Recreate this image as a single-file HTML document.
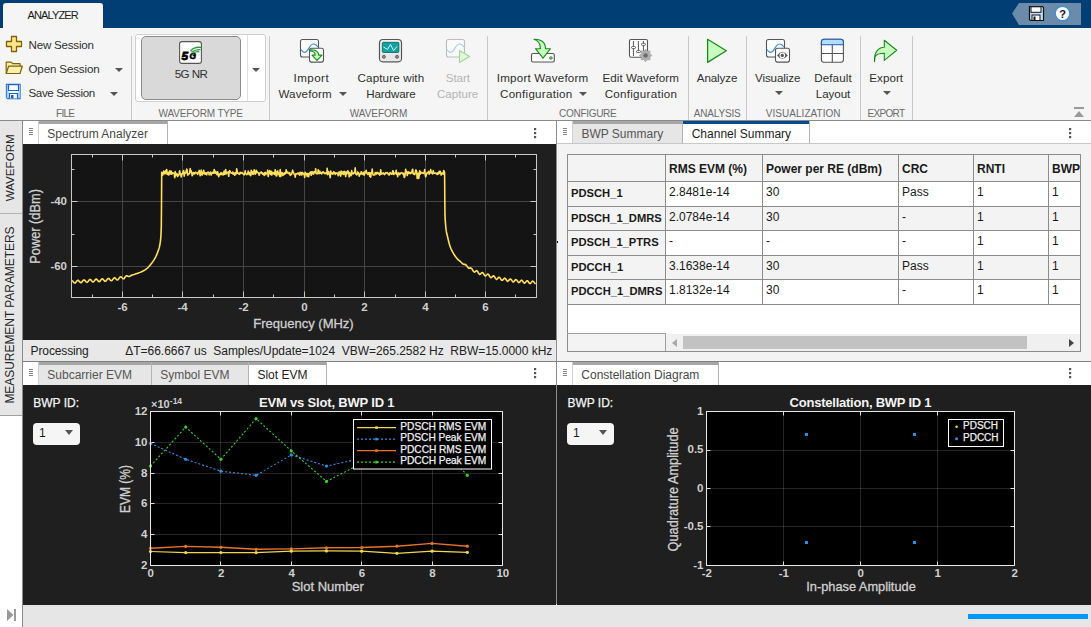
<!DOCTYPE html>
<html><head><meta charset="utf-8"><style>
*{margin:0;padding:0;box-sizing:border-box}
html,body{width:1091px;height:627px;overflow:hidden;background:#fff;font-family:"Liberation Sans",sans-serif;color:#222}
.a{position:absolute}
.t{position:absolute;white-space:nowrap;line-height:1}
#top{left:0;top:0;width:1091px;height:28px;background:#003e73}
#tab{left:3px;top:3px;width:100px;height:25px;background:#f5f5f5;border-radius:3px 3px 0 0}
#ts{left:0;top:28px;width:1091px;height:92px;background:#f5f5f5}
.sep{position:absolute;width:1px;background:#c8c8c8;top:36px;height:84px}
.lbl{position:absolute;top:107px;font-size:10px;color:#6b6b6b;white-space:nowrap;line-height:1;text-align:center}
.btxt{position:absolute;font-size:12px;color:#262626;white-space:nowrap;line-height:16px;text-align:center}
.arr{position:absolute;width:0;height:0;border-left:4px solid transparent;border-right:4px solid transparent;border-top:4px solid #555}
</style></head><body>
<div class="a" id="top"></div>
<div class="a" id="tab"></div>
<div class="t" style="left:-146.9px;width:400px;text-align:center;top:9.99px;font-size:11px;color:#1a1a1a;font-weight:normal;letter-spacing:-0.894px;text-indent:-0.894px;">ANALYZER</div>
<svg class="a" style="left:1011px;top:3px" width="71" height="22"><polygon points="1,10.5 8,0 70,0 70,22 8,22" fill="#6b8bab"/></svg>
<svg class="a" style="left:1028px;top:5px" width="17" height="17" viewBox="0 0 17 17">
<path d="M1.5 1.5h13l1 1v13h-13l-1-1z" fill="#bfe3ff" stroke="#111" stroke-width="1.2"/>
<rect x="3" y="1.8" width="10" height="5.5" fill="#fff" stroke="#111" stroke-width="1"/>
<rect x="4" y="10" width="8" height="5.5" fill="#fff" stroke="#111" stroke-width="1"/>
<rect x="5.5" y="11.5" width="2" height="4" fill="#111"/></svg>
<svg class="a" style="left:1054px;top:5px" width="17" height="17" viewBox="0 0 17 17">
<circle cx="8.5" cy="8.5" r="7.2" fill="#fff" stroke="#3a8fd9" stroke-width="1.2"/>
<text x="8.5" y="13" font-family="Liberation Sans" font-weight="bold" font-size="11" text-anchor="middle" fill="#111">?</text></svg>
<div class="a" id="ts"></div>
<div class="a" style="left:0;top:120px;width:1091px;height:1px;background:#8a8a8a"></div>
<div class="sep" style="left:131px"></div>
<div class="sep" style="left:269px"></div>
<div class="sep" style="left:487px"></div>
<div class="sep" style="left:688px"></div>
<div class="sep" style="left:746px"></div>
<div class="sep" style="left:860px"></div>
<div class="sep" style="left:912px"></div>
<svg class="a" style="left:5px;top:35px;overflow:visible" width="18" height="18" viewBox="0 0 18 18"><path d="M6.5 1.5h5v5h5v5h-5v5h-5v-5h-5v-5h5z" fill="#fde68a" stroke="#7d6400" stroke-width="1.3" stroke-linejoin="round"/></svg>
<svg class="a" style="left:5px;top:59px;overflow:visible" width="18" height="16" viewBox="0 0 18 16"><path d="M1.2 14.5V3.2h5l1.5 1.5h7.3v2.3" fill="#fdeeb0" stroke="#7d6400" stroke-width="1.2" stroke-linejoin="round"/><path d="M1.2 14.5L3.6 7.2H17.3L15 14.5z" fill="#fdeeb0" stroke="#7d6400" stroke-width="1.2" stroke-linejoin="round"/></svg>
<svg class="a" style="left:5px;top:83px;overflow:visible" width="17" height="17" viewBox="0 0 17 17"><path d="M1.5 1.5h13.5v14h-12.5l-1-1z" fill="#fff" stroke="#1e64c8" stroke-width="1.3"/><rect x="1.7" y="1.7" width="2" height="13.5" fill="#9fd0ff"/><rect x="13" y="1.7" width="2" height="13.5" fill="#9fd0ff"/><path d="M3.5 1.5v6h10v-6" fill="none" stroke="#1e64c8" stroke-width="1.2"/><path d="M4.5 15.5v-5h8v5" fill="#fff" stroke="#1e64c8" stroke-width="1.2"/><rect x="6" y="12" width="2.5" height="3.5" fill="#1e64c8"/></svg>
<div class="t" style="left:28.5px;top:39.18px;font-size:11.6px;color:#303030;font-weight:normal;letter-spacing:-0.220px;">New Session</div>
<div class="t" style="left:28.5px;top:63.18px;font-size:11.6px;color:#303030;font-weight:normal;letter-spacing:-0.152px;">Open Session</div>
<div class="t" style="left:28.5px;top:87.18px;font-size:11.6px;color:#303030;font-weight:normal;letter-spacing:-0.385px;">Save Session</div>
<svg class="a" style="left:115px;top:67.5px" width="8" height="4"><polygon points="0,0 8,0 4.0,4" fill="#555"/></svg>
<svg class="a" style="left:110px;top:91.5px" width="8" height="4"><polygon points="0,0 8,0 4.0,4" fill="#555"/></svg>
<div class="a" style="left:135px;top:34px;width:131px;height:68px;background:#fff;border:1px solid #cfcfcf;border-radius:3px"></div>
<div class="a" style="left:141px;top:36px;width:100px;height:64px;background:#d9d9d9;border:1px solid #8c8c8c;border-radius:5px"></div>
<div class="a" style="left:247px;top:35px;width:1px;height:66px;background:#e0e0e0"></div>
<svg class="a" style="left:252px;top:67.5px" width="8" height="4"><polygon points="0,0 8,0 4.0,4" fill="#555"/></svg>
<svg class="a" style="left:179px;top:41px;overflow:visible" width="23" height="23" viewBox="0 0 23 23"><rect x="0.6" y="0.6" width="21.8" height="21.8" rx="2.5" fill="#fff" stroke="#555" stroke-width="1.1"/><text x="2.6" y="18.6" font-family="Liberation Sans" font-weight="bold" font-style="italic" font-size="11.8" fill="#000" stroke="#000" stroke-width="0.8">5</text><text x="10.6" y="18.4" font-family="Liberation Sans" font-weight="bold" font-style="italic" font-size="8.4" fill="#000" stroke="#000" stroke-width="0.6">G</text><path d="M11.8 9.8 Q15.5 5.6 21.8 6.4 M13 11 Q16.5 8.3 21 8.6 M14.2 12 Q17 10.3 19.8 10.6" stroke="#2a9a3a" stroke-width="1.3" fill="none" stroke-linecap="round"/></svg>
<div class="t" style="left:-8.699999999999989px;width:400px;text-align:center;top:67.68px;font-size:11.6px;color:#303030;font-weight:normal;letter-spacing:-0.538px;text-indent:-0.538px;">5G NR</div>
<svg class="a" style="left:296px;top:36px;overflow:visible" width="32" height="30" viewBox="0 0 32 30"><rect x="4.5" y="3.5" width="18" height="17.5" rx="2" fill="#fff" stroke="#555" stroke-width="1.1"/><path d="M5 13.5 C7 16.5 8.5 17 10.5 15.5 S14 8 17.5 8 C19.5 8 21 9.5 22 11" stroke="#3a8fe0" stroke-width="1.2" fill="none"/><rect x="13.5" y="12.3" width="14" height="13.8" rx="2" fill="#fff" stroke="#555" stroke-width="1.1"/><path d="M14.4 13.8 C19.5 13.8 22.6 15.5 22.6 19.1 H26 L21 24.4 L16 19.1 H19.2 C19.2 17 17.5 15.2 14.4 15z" fill="#c8ffc0" stroke="#1a8c1a" stroke-width="1.1" stroke-linejoin="round"/></svg>
<div class="t" style="left:111.10000000000002px;width:400px;text-align:center;top:71.88px;font-size:11.6px;color:#303030;font-weight:normal;letter-spacing:0.465px;text-indent:0.465px;">Import</div>
<div class="t" style="left:105.10000000000002px;width:400px;text-align:center;top:87.88px;font-size:11.6px;color:#303030;font-weight:normal;letter-spacing:0.111px;text-indent:0.111px;">Waveform</div>
<svg class="a" style="left:338.5px;top:92px" width="8" height="4"><polygon points="0,0 8,0 4.0,4" fill="#555"/></svg>
<svg class="a" style="left:375px;top:36px;overflow:visible" width="32" height="30" viewBox="0 0 32 30"><rect x="4.5" y="3.5" width="22" height="22.3" rx="3.5" fill="#f4f0f0" stroke="#555" stroke-width="1.2"/><rect x="7.3" y="6.3" width="16.6" height="10.2" rx="1" fill="#0fa3a3" stroke="#0b5e5e" stroke-width="0.8"/><path d="M8.5 11 L12.5 13.5 L15.5 8.5 L18.5 14.5 L22 10.5" stroke="#e8ffff" stroke-width="0.9" fill="none"/><rect x="5.5" y="17.5" width="20" height="7" fill="#e6e6e6"/><circle cx="8.9" cy="20.8" r="1.5" fill="#888" stroke="#555" stroke-width="0.8"/><circle cx="22" cy="20.8" r="1.5" fill="#888" stroke="#555" stroke-width="0.8"/></svg>
<div class="t" style="left:190.89999999999998px;width:400px;text-align:center;top:71.88px;font-size:11.6px;color:#303030;font-weight:normal;letter-spacing:0.134px;text-indent:0.134px;">Capture with</div>
<div class="t" style="left:191px;width:400px;text-align:center;top:87.88px;font-size:11.6px;color:#303030;font-weight:normal;letter-spacing:-0.113px;text-indent:-0.113px;">Hardware</div>
<svg class="a" style="left:442px;top:36px;overflow:visible" width="32" height="30" viewBox="0 0 32 30"><rect x="4.5" y="3.5" width="18" height="17.5" rx="2" fill="#fafafa" stroke="#bdbdbd" stroke-width="1.1"/><path d="M5 13.5 C7 16.5 8.5 17 10.5 15.5 S14 8 17.5 8 C19.5 8 21 9.5 22 11" stroke="#a8cdf0" stroke-width="1.2" fill="none"/><path d="M17.5 14.5 L27.5 20.5 L17.5 26.5z" fill="#e0f7dc" stroke="#9fd49a" stroke-width="1.1" stroke-linejoin="round"/></svg>
<div class="t" style="left:257.9px;width:400px;text-align:center;top:71.88px;font-size:11.6px;color:#b4b4b4;font-weight:normal;letter-spacing:-0.049px;text-indent:-0.049px;">Start</div>
<div class="t" style="left:257.6px;width:400px;text-align:center;top:87.88px;font-size:11.6px;color:#b4b4b4;font-weight:normal;letter-spacing:-0.012px;text-indent:-0.012px;">Capture</div>
<svg class="a" style="left:527px;top:36px;overflow:visible" width="32" height="30" viewBox="0 0 32 30"><rect x="4.5" y="17.5" width="22.8" height="8.5" rx="1.5" fill="#fff" stroke="#555" stroke-width="1.1"/><circle cx="23.9" cy="22" r="1.3" fill="#9ce09a" stroke="#1a8c1a" stroke-width="0.9"/><path d="M7 3.3 C12.5 3 18.5 5 18.5 12.7 h5 l-7.5 9.5 l-7.5 -9.5 h5 C13.5 7.5 11 4.5 7 3.3z" fill="#c8ffc0" stroke="#1a8c1a" stroke-width="1.1" stroke-linejoin="round"/></svg>
<div class="t" style="left:342.5px;width:400px;text-align:center;top:71.88px;font-size:11.6px;color:#303030;font-weight:normal;letter-spacing:0.213px;text-indent:0.213px;">Import Waveform</div>
<div class="t" style="left:336.1px;width:400px;text-align:center;top:87.88px;font-size:11.6px;color:#303030;font-weight:normal;letter-spacing:0.267px;text-indent:0.267px;">Configuration</div>
<svg class="a" style="left:579px;top:92px" width="8" height="4"><polygon points="0,0 8,0 4.0,4" fill="#555"/></svg>
<svg class="a" style="left:625px;top:36px;overflow:visible" width="32" height="30" viewBox="0 0 32 30"><rect x="4.5" y="3.5" width="18" height="17.7" rx="1.5" fill="#fff" stroke="#555" stroke-width="1.1"/><path d="M8.4 5 v15 M13.4 5 v12 M18.4 5 v10" stroke="#555" stroke-width="1"/><rect x="6.5" y="10.5" width="4" height="2" rx="1" fill="#fff" stroke="#555" stroke-width="0.9"/><rect x="11.5" y="14.6" width="4" height="2" rx="1" fill="#fff" stroke="#555" stroke-width="0.9"/><rect x="16.5" y="7.4" width="4" height="2" rx="1" fill="#fff" stroke="#555" stroke-width="0.9"/><polygon points="26.90,19.40 24.85,21.16 25.05,23.85 22.36,23.65 20.60,25.70 18.84,23.65 16.15,23.85 16.35,21.16 14.30,19.40 16.35,17.64 16.15,14.95 18.84,15.15 20.60,13.10 22.36,15.15 25.05,14.95 24.85,17.64" fill="#b0b0b0" stroke="#9a9a9a" stroke-width="0.6"/><circle cx="20.6" cy="19.4" r="2.2" fill="#6a6a6a"/></svg>
<div class="t" style="left:440.70000000000005px;width:400px;text-align:center;top:71.88px;font-size:11.6px;color:#303030;font-weight:normal;letter-spacing:0.072px;text-indent:0.072px;">Edit Waveform</div>
<div class="t" style="left:440.79999999999995px;width:400px;text-align:center;top:87.88px;font-size:11.6px;color:#303030;font-weight:normal;letter-spacing:0.275px;text-indent:0.275px;">Configuration</div>
<svg class="a" style="left:703px;top:36px;overflow:visible" width="32" height="30" viewBox="0 0 32 30"><path d="M4.6 3.3 L23.3 14.8 L4.6 26.4z" fill="#c8ffc0" stroke="#1a8c1a" stroke-width="1.3" stroke-linejoin="round"/></svg>
<div class="t" style="left:517.1px;width:400px;text-align:center;top:71.88px;font-size:11.6px;color:#303030;font-weight:normal;letter-spacing:-0.112px;text-indent:-0.112px;">Analyze</div>
<svg class="a" style="left:762px;top:36px;overflow:visible" width="32" height="30" viewBox="0 0 32 30"><rect x="4.5" y="3.5" width="18" height="17.5" rx="2" fill="#fff" stroke="#555" stroke-width="1.1"/><path d="M5 13.5 C7 16.5 8.5 17 10.5 15.5 S14 8 17.5 8 C19.5 8 21 9.5 22 11" stroke="#3a8fe0" stroke-width="1.2" fill="none"/><rect x="13.5" y="12.3" width="14" height="13.8" rx="2" fill="#fff" stroke="#555" stroke-width="1.1"/><path d="M15 19.4 Q20.3 12.8 25.8 19.4 Q20.3 26 15 19.4z" fill="#5a5a5a"/><circle cx="20.3" cy="19.4" r="2.8" fill="#fff"/><circle cx="20.3" cy="19.4" r="1.7" fill="#5a5a5a"/></svg>
<div class="t" style="left:577.7px;width:400px;text-align:center;top:71.88px;font-size:11.6px;color:#303030;font-weight:normal;letter-spacing:-0.102px;text-indent:-0.102px;">Visualize</div>
<svg class="a" style="left:775.2px;top:91px" width="8" height="4"><polygon points="0,0 8,0 4.0,4" fill="#555"/></svg>
<svg class="a" style="left:817px;top:36px;overflow:visible" width="32" height="30" viewBox="0 0 32 30"><rect x="4.4" y="3.4" width="22" height="22.8" rx="2.5" fill="#fff" stroke="#555" stroke-width="1.1"/><path d="M4.4 8.8 v-3 a2.5 2.5 0 0 1 2.5 -2.5 h17 a2.5 2.5 0 0 1 2.5 2.5 v3z" fill="#b3dcff" stroke="#1a5cb0" stroke-width="1.1"/><path d="M15.3 8.8 v17.4 M4.4 17.5 h22" stroke="#555" stroke-width="1.1"/></svg>
<div class="t" style="left:632.9px;width:400px;text-align:center;top:71.88px;font-size:11.6px;color:#303030;font-weight:normal;letter-spacing:0.124px;text-indent:0.124px;">Default</div>
<div class="t" style="left:633px;width:400px;text-align:center;top:87.88px;font-size:11.6px;color:#303030;font-weight:normal;letter-spacing:-0.066px;text-indent:-0.066px;">Layout</div>
<svg class="a" style="left:869px;top:36px;overflow:visible" width="32" height="30" viewBox="0 0 32 30"><path d="M5.5 25.6 C5 17 9 11.2 15.3 11.2 V4.3 L27.7 14.3 L15.3 24.4 V17.2 C10.5 17.2 7 18.5 6 21z" fill="#c8ffc0" stroke="#1a8c1a" stroke-width="1.1" stroke-linejoin="round"/></svg>
<div class="t" style="left:686.2px;width:400px;text-align:center;top:71.88px;font-size:11.6px;color:#303030;font-weight:normal;letter-spacing:0.055px;text-indent:0.055px;">Export</div>
<svg class="a" style="left:883.2px;top:91px" width="8" height="4"><polygon points="0,0 8,0 4.0,4" fill="#555"/></svg>
<div class="t" style="left:-134.5px;width:400px;text-align:center;top:108.83px;font-size:10px;color:#6b6b6b;font-weight:normal;letter-spacing:-0.706px;text-indent:-0.706px;">FILE</div>
<div class="t" style="left:0.75px;width:400px;text-align:center;top:108.83px;font-size:10px;color:#6b6b6b;font-weight:normal;letter-spacing:-0.166px;text-indent:-0.166px;">WAVEFORM TYPE</div>
<div class="t" style="left:178.5px;width:400px;text-align:center;top:108.83px;font-size:10px;color:#6b6b6b;font-weight:normal;letter-spacing:-0.011px;text-indent:-0.011px;">WAVEFORM</div>
<div class="t" style="left:387.9px;width:400px;text-align:center;top:108.83px;font-size:10px;color:#6b6b6b;font-weight:normal;letter-spacing:-0.288px;text-indent:-0.288px;">CONFIGURE</div>
<div class="t" style="left:517.25px;width:400px;text-align:center;top:108.83px;font-size:10px;color:#6b6b6b;font-weight:normal;letter-spacing:-0.182px;text-indent:-0.182px;">ANALYSIS</div>
<div class="t" style="left:603.2px;width:400px;text-align:center;top:108.83px;font-size:10px;color:#6b6b6b;font-weight:normal;letter-spacing:0.035px;text-indent:0.035px;">VISUALIZATION</div>
<div class="t" style="left:686.25px;width:400px;text-align:center;top:108.83px;font-size:10px;color:#6b6b6b;font-weight:normal;letter-spacing:-0.688px;text-indent:-0.688px;">EXPORT</div>
<svg class="a" style="left:1074px;top:107px;overflow:visible" width="10" height="10" viewBox="0 0 10 10"><rect x="0" y="0" width="10" height="2" fill="#999"/><polygon points="0,10 10,10 5,4" fill="#999"/></svg>
<div class="a" style="left:0;top:121px;width:22px;height:294px;background:#e6e6e6"></div>
<div class="a" style="left:0;top:213px;width:22px;height:1px;background:#b4b4b4"></div>
<div class="a" style="left:0;top:415px;width:22px;height:1px;background:#a0a0a0"></div>
<div class="a" style="left:22px;top:121px;width:1px;height:506px;background:#8c8c8c"></div>
<div class="t" style="left:-40px;top:161.5px;width:100px;text-align:center;font-size:11.6px;color:#262626;transform:rotate(-90deg)">WAVEFORM</div>
<div class="t" style="left:-90px;top:308.5px;width:200px;text-align:center;font-size:12px;color:#262626;transform:rotate(-90deg);letter-spacing:-0.05px">MEASUREMENT PARAMETERS</div>
<svg class="a" style="left:7px;top:609px;overflow:visible" width="9" height="12" viewBox="0 0 9 12"><polygon points="0,0 6.5,6 0,12" fill="#999"/><rect x="7" y="0" width="2" height="12" fill="#999"/></svg>
<div class="a" style="left:23px;top:605px;width:1068px;height:22px;background:#e6e6e6"></div>
<div class="a" style="left:968px;top:614px;width:120px;height:5px;background:#0097ff"></div>
<div class="a" style="left:556px;top:121px;width:1px;height:483px;background:#8c8c8c"></div>
<div class="a" style="left:23px;top:121px;width:533px;height:23px;background:#fff"></div>
<div class="a" style="left:38px;top:121px;width:1px;height:23px;background:#d0d0d0"></div>
<div class="a" style="left:39px;top:121px;width:128px;height:3px;background:#a6a6a6"></div>
<div class="a" style="left:167px;top:121px;width:1px;height:23px;background:#b4b4b4"></div>
<svg class="a" style="left:29px;top:128px" width="4" height="7"><rect x="0" y="0" width="4" height="1" fill="#888"/><rect x="0" y="2" width="4" height="1" fill="#888"/><rect x="0" y="4" width="4" height="1" fill="#888"/><rect x="0" y="6" width="4" height="1" fill="#888"/></svg>
<div class="t" style="left:47.3px;top:128.24px;font-size:12px;color:#484848;font-weight:normal;">Spectrum Analyzer</div>
<svg class="a" style="left:534px;top:128px" width="3" height="11"><rect x="0" y="0" width="2.2" height="2.2" fill="#555"/><rect x="0" y="4" width="2.2" height="2.2" fill="#555"/><rect x="0" y="8" width="2.2" height="2.2" fill="#555"/></svg>
<div class="a" style="left:23px;top:144px;width:533px;height:196px;background:#1f1f1f"></div>
<div class="a" style="left:23px;top:340px;width:533px;height:21px;background:#e8e8e8"></div>
<div class="t" style="left:30.6px;top:345.04px;font-size:12px;color:#222;font-weight:normal;letter-spacing:-0.129px;">Processing</div>
<div class="t" style="left:125.3px;top:345.04px;font-size:12px;color:#222;font-weight:normal;letter-spacing:-0.029px;">&Delta;T=66.6667 us&nbsp; Samples/Update=1024&nbsp; VBW=265.2582 Hz&nbsp; RBW=15.0000 kHz</div>
<div class="a" style="left:557px;top:121px;width:534px;height:23px;background:#fff"></div>
<div class="a" style="left:572px;top:121px;width:1px;height:23px;background:#d0d0d0"></div>
<div class="a" style="left:573px;top:121px;width:110px;height:23px;background:#e6e6e6"></div>
<div class="a" style="left:573px;top:121px;width:110px;height:3px;background:#a6a6a6"></div>
<div class="a" style="left:682px;top:121px;width:1px;height:23px;background:#b4b4b4"></div>
<div class="a" style="left:683px;top:121px;width:126px;height:3px;background:#004b8d"></div>
<div class="a" style="left:809px;top:121px;width:1px;height:23px;background:#b4b4b4"></div>
<svg class="a" style="left:563px;top:128px" width="4" height="7"><rect x="0" y="0" width="4" height="1" fill="#888"/><rect x="0" y="2" width="4" height="1" fill="#888"/><rect x="0" y="4" width="4" height="1" fill="#888"/><rect x="0" y="6" width="4" height="1" fill="#888"/></svg>
<div class="t" style="left:581.4px;top:127.84px;font-size:12px;color:#555;font-weight:normal;">BWP Summary</div>
<div class="t" style="left:691.7px;top:127.84px;font-size:12px;color:#222;font-weight:normal;">Channel Summary</div>
<svg class="a" style="left:1069px;top:128px" width="3" height="11"><rect x="0" y="0" width="2.2" height="2.2" fill="#555"/><rect x="0" y="4" width="2.2" height="2.2" fill="#555"/><rect x="0" y="8" width="2.2" height="2.2" fill="#555"/></svg>
<div class="a" style="left:557px;top:143px;width:534px;height:1px;background:#c8c8c8"></div>
<div class="a" style="left:557px;top:144px;width:534px;height:217px;background:#f3f3f3"></div>
<div class="a" style="left:567px;top:154px;width:514px;height:198px;background:#fff;border:1px solid #8c8c8c"></div>
<div class="a" style="left:568px;top:155px;width:512px;height:26px;background:#f3f3f3"></div>
<div class="a" style="left:568px;top:182px;width:97px;height:24px;background:#f3f3f3"></div>
<div class="a" style="left:666px;top:182px;width:414px;height:24px;background:#fff"></div>
<div class="a" style="left:568px;top:207px;width:97px;height:23px;background:#f3f3f3"></div>
<div class="a" style="left:666px;top:207px;width:414px;height:23px;background:#f3f3f3"></div>
<div class="a" style="left:568px;top:231px;width:97px;height:24px;background:#f3f3f3"></div>
<div class="a" style="left:666px;top:231px;width:414px;height:24px;background:#fff"></div>
<div class="a" style="left:568px;top:256px;width:97px;height:23px;background:#f3f3f3"></div>
<div class="a" style="left:666px;top:256px;width:414px;height:23px;background:#f3f3f3"></div>
<div class="a" style="left:568px;top:280px;width:97px;height:24px;background:#f3f3f3"></div>
<div class="a" style="left:666px;top:280px;width:414px;height:24px;background:#fff"></div>
<div class="a" style="left:568px;top:333px;width:97px;height:18px;background:#f3f3f3"></div>
<div class="a" style="left:567px;top:333px;width:99px;height:1px;background:#a0a0a0"></div>
<div class="a" style="left:665px;top:333px;width:1px;height:18px;background:#a0a0a0"></div>
<div class="a" style="left:666px;top:334px;width:414px;height:17px;background:#f0f0f0"></div>
<div class="a" style="left:683px;top:336px;width:344px;height:13px;background:#c2c2c2"></div>
<svg class="a" style="left:672px;top:339px;overflow:visible" width="5" height="8" viewBox="0 0 5 8"><polygon points="5,0 0,4 5,8" fill="#a8a8a8"/></svg>
<svg class="a" style="left:1069px;top:339px;overflow:visible" width="5" height="8" viewBox="0 0 5 8"><polygon points="0,0 5,4 0,8" fill="#444"/></svg>
<div class="a" style="left:567px;top:181px;width:514px;height:1px;background:#8c8c8c"></div>
<div class="a" style="left:567px;top:206px;width:514px;height:1px;background:#8c8c8c"></div>
<div class="a" style="left:567px;top:230px;width:514px;height:1px;background:#8c8c8c"></div>
<div class="a" style="left:567px;top:255px;width:514px;height:1px;background:#8c8c8c"></div>
<div class="a" style="left:567px;top:279px;width:514px;height:1px;background:#8c8c8c"></div>
<div class="a" style="left:567px;top:304px;width:514px;height:1px;background:#8c8c8c"></div>
<div class="a" style="left:665px;top:154px;width:1px;height:150px;background:#8c8c8c"></div>
<div class="a" style="left:762px;top:154px;width:1px;height:150px;background:#8c8c8c"></div>
<div class="a" style="left:898px;top:154px;width:1px;height:150px;background:#8c8c8c"></div>
<div class="a" style="left:973px;top:154px;width:1px;height:150px;background:#8c8c8c"></div>
<div class="a" style="left:1048px;top:154px;width:1px;height:150px;background:#8c8c8c"></div>
<div class="t" style="left:669px;top:163.34px;font-size:12px;color:#1a1a1a;font-weight:bold;">RMS EVM (%)</div>
<div class="t" style="left:766px;top:163.34px;font-size:12px;color:#1a1a1a;font-weight:bold;">Power per RE (dBm)</div>
<div class="t" style="left:902px;top:163.34px;font-size:12px;color:#1a1a1a;font-weight:bold;">CRC</div>
<div class="t" style="left:977px;top:163.34px;font-size:12px;color:#1a1a1a;font-weight:bold;">RNTI</div>
<div class="t" style="left:1052px;top:163.34px;font-size:12px;color:#1a1a1a;font-weight:bold;">BWP</div>
<div class="t" style="left:571px;top:187.82px;font-size:11.2px;color:#1a1a1a;font-weight:bold;">PDSCH_1</div>
<div class="t" style="left:669px;top:186.24px;font-size:12px;color:#1a1a1a;font-weight:normal;">2.8481e-14</div>
<div class="t" style="left:766px;top:186.24px;font-size:12px;color:#1a1a1a;font-weight:normal;">30</div>
<div class="t" style="left:902px;top:186.24px;font-size:12px;color:#1a1a1a;font-weight:normal;">Pass</div>
<div class="t" style="left:977px;top:186.24px;font-size:12px;color:#1a1a1a;font-weight:normal;">1</div>
<div class="t" style="left:1052px;top:186.24px;font-size:12px;color:#1a1a1a;font-weight:normal;">1</div>
<div class="t" style="left:571px;top:212.82px;font-size:11.2px;color:#1a1a1a;font-weight:bold;">PDSCH_1_DMRS</div>
<div class="t" style="left:669px;top:211.24px;font-size:12px;color:#1a1a1a;font-weight:normal;">2.0784e-14</div>
<div class="t" style="left:766px;top:211.24px;font-size:12px;color:#1a1a1a;font-weight:normal;">30</div>
<div class="t" style="left:902px;top:211.24px;font-size:12px;color:#1a1a1a;font-weight:normal;">-</div>
<div class="t" style="left:977px;top:211.24px;font-size:12px;color:#1a1a1a;font-weight:normal;">1</div>
<div class="t" style="left:1052px;top:211.24px;font-size:12px;color:#1a1a1a;font-weight:normal;">1</div>
<div class="t" style="left:571px;top:236.82px;font-size:11.2px;color:#1a1a1a;font-weight:bold;">PDSCH_1_PTRS</div>
<div class="t" style="left:669px;top:235.24px;font-size:12px;color:#1a1a1a;font-weight:normal;">-</div>
<div class="t" style="left:766px;top:235.24px;font-size:12px;color:#1a1a1a;font-weight:normal;">-</div>
<div class="t" style="left:902px;top:235.24px;font-size:12px;color:#1a1a1a;font-weight:normal;">-</div>
<div class="t" style="left:977px;top:235.24px;font-size:12px;color:#1a1a1a;font-weight:normal;">1</div>
<div class="t" style="left:1052px;top:235.24px;font-size:12px;color:#1a1a1a;font-weight:normal;">1</div>
<div class="t" style="left:571px;top:261.82px;font-size:11.2px;color:#1a1a1a;font-weight:bold;">PDCCH_1</div>
<div class="t" style="left:669px;top:260.24px;font-size:12px;color:#1a1a1a;font-weight:normal;">3.1638e-14</div>
<div class="t" style="left:766px;top:260.24px;font-size:12px;color:#1a1a1a;font-weight:normal;">30</div>
<div class="t" style="left:902px;top:260.24px;font-size:12px;color:#1a1a1a;font-weight:normal;">Pass</div>
<div class="t" style="left:977px;top:260.24px;font-size:12px;color:#1a1a1a;font-weight:normal;">1</div>
<div class="t" style="left:1052px;top:260.24px;font-size:12px;color:#1a1a1a;font-weight:normal;">1</div>
<div class="t" style="left:571px;top:285.82px;font-size:11.2px;color:#1a1a1a;font-weight:bold;">PDCCH_1_DMRS</div>
<div class="t" style="left:669px;top:284.24px;font-size:12px;color:#1a1a1a;font-weight:normal;">1.8132e-14</div>
<div class="t" style="left:766px;top:284.24px;font-size:12px;color:#1a1a1a;font-weight:normal;">30</div>
<div class="t" style="left:902px;top:284.24px;font-size:12px;color:#1a1a1a;font-weight:normal;">-</div>
<div class="t" style="left:977px;top:284.24px;font-size:12px;color:#1a1a1a;font-weight:normal;">1</div>
<div class="t" style="left:1052px;top:284.24px;font-size:12px;color:#1a1a1a;font-weight:normal;">1</div>
<div class="a" style="left:1080px;top:154px;width:10px;height:198px;background:#f3f3f3;border-left:1px solid #8c8c8c"></div>
<div class="a" style="left:23px;top:361px;width:1068px;height:1px;background:#808080"></div>
<div class="a" style="left:557px;top:241px;width:1px;height:2px;background:#000"></div>
<div class="a" style="left:23px;top:362px;width:533px;height:23px;background:#fff"></div>
<div class="a" style="left:38px;top:362px;width:1px;height:23px;background:#d0d0d0"></div>
<div class="a" style="left:39px;top:362px;width:210px;height:23px;background:#e6e6e6"></div>
<div class="a" style="left:39px;top:362px;width:288px;height:3px;background:#a6a6a6"></div>
<div class="a" style="left:151px;top:362px;width:1px;height:23px;background:#b4b4b4"></div>
<div class="a" style="left:248px;top:362px;width:1px;height:23px;background:#b4b4b4"></div>
<div class="a" style="left:326px;top:362px;width:1px;height:23px;background:#b4b4b4"></div>
<svg class="a" style="left:29px;top:369px" width="4" height="7"><rect x="0" y="0" width="4" height="1" fill="#888"/><rect x="0" y="2" width="4" height="1" fill="#888"/><rect x="0" y="4" width="4" height="1" fill="#888"/><rect x="0" y="6" width="4" height="1" fill="#888"/></svg>
<div class="t" style="left:47.3px;top:368.64px;font-size:12px;color:#555;font-weight:normal;">Subcarrier EVM</div>
<div class="t" style="left:160.2px;top:368.64px;font-size:12px;color:#555;font-weight:normal;">Symbol EVM</div>
<div class="t" style="left:257.4px;top:368.64px;font-size:12px;color:#222;font-weight:normal;">Slot EVM</div>
<svg class="a" style="left:534px;top:368px" width="3" height="11"><rect x="0" y="0" width="2.2" height="2.2" fill="#555"/><rect x="0" y="4" width="2.2" height="2.2" fill="#555"/><rect x="0" y="8" width="2.2" height="2.2" fill="#555"/></svg>
<div class="a" style="left:23px;top:385px;width:533px;height:220px;background:#1f1f1f"></div>
<div class="a" style="left:557px;top:362px;width:534px;height:23px;background:#fff"></div>
<div class="a" style="left:572px;top:362px;width:1px;height:23px;background:#d0d0d0"></div>
<div class="a" style="left:573px;top:362px;width:145px;height:3px;background:#a6a6a6"></div>
<div class="a" style="left:718px;top:362px;width:1px;height:23px;background:#b4b4b4"></div>
<svg class="a" style="left:563px;top:369px" width="4" height="7"><rect x="0" y="0" width="4" height="1" fill="#888"/><rect x="0" y="2" width="4" height="1" fill="#888"/><rect x="0" y="4" width="4" height="1" fill="#888"/><rect x="0" y="6" width="4" height="1" fill="#888"/></svg>
<div class="t" style="left:581.3px;top:368.64px;font-size:12px;color:#484848;font-weight:normal;">Constellation Diagram</div>
<svg class="a" style="left:1069px;top:368px" width="3" height="11"><rect x="0" y="0" width="2.2" height="2.2" fill="#555"/><rect x="0" y="4" width="2.2" height="2.2" fill="#555"/><rect x="0" y="8" width="2.2" height="2.2" fill="#555"/></svg>
<div class="a" style="left:557px;top:385px;width:534px;height:220px;background:#1f1f1f"></div>
<svg class="a" style="left:0px;top:0px;overflow:visible" width="1091" height="627" viewBox="0 0 1091 627"><rect x="71.5" y="154.5" width="465.0" height="143.0" fill="#141414"/><path d="M122.5 154.5V297.5 M182.5 154.5V297.5 M243.5 154.5V297.5 M304.5 154.5V297.5 M364.5 154.5V297.5 M425.5 154.5V297.5 M485.5 154.5V297.5 M71.5 201.5H536.5 M71.5 266.5H536.5" stroke="#454545" stroke-width="1" fill="none"/><path d="M92.5 297.5v-3M92.5 154.5v3 M122.5 297.5v-6M122.5 154.5v6 M152.5 297.5v-3M152.5 154.5v3 M182.5 297.5v-6M182.5 154.5v6 M213.5 297.5v-3M213.5 154.5v3 M243.5 297.5v-6M243.5 154.5v6 M273.5 297.5v-3M273.5 154.5v3 M304.5 297.5v-6M304.5 154.5v6 M334.5 297.5v-3M334.5 154.5v3 M364.5 297.5v-6M364.5 154.5v6 M395.5 297.5v-3M395.5 154.5v3 M425.5 297.5v-6M425.5 154.5v6 M455.5 297.5v-3M455.5 154.5v3 M485.5 297.5v-6M485.5 154.5v6 M515.5 297.5v-3M515.5 154.5v3 M71.5 169.5h3M536.5 169.5h-3 M71.5 201.5h6M536.5 201.5h-6 M71.5 234.5h3M536.5 234.5h-3 M71.5 266.5h6M536.5 266.5h-6" stroke="#c8c8c8" stroke-width="1" fill="none"/><path d="M72.00 280.49 L73.00 281.44 L74.00 282.74 L75.00 283.09 L76.00 282.10 L77.00 280.71 L78.00 280.20 L79.00 281.03 L80.00 282.33 L81.00 282.79 L82.00 281.90 L83.00 280.47 L84.00 279.82 L85.00 280.52 L86.00 281.84 L87.00 282.42 L88.00 281.64 L89.00 280.20 L90.00 279.42 L91.00 280.01 L92.00 281.33 L93.00 282.04 L94.00 281.40 L95.00 279.97 L96.00 279.09 L97.00 279.56 L98.00 280.87 L99.00 281.70 L100.00 281.19 L101.00 279.79 L102.00 278.79 L103.00 279.12 L104.00 280.39 L105.00 281.32 L106.00 280.93 L107.00 279.55 L108.00 278.44 L109.00 278.60 L110.00 279.81 L111.00 280.79 L112.00 280.51 L113.00 279.13 L114.00 277.88 L115.00 277.85 L116.00 278.94 L117.00 279.95 L118.00 279.75 L119.00 278.38 L120.00 277.01 L121.00 276.79 L122.00 277.77 L123.00 278.80 L124.00 278.65 L125.00 277.31 L126.00 276.08 L127.00 275.80 L128.00 276.27 L129.00 276.60 L130.00 276.29 L131.00 275.56 L132.00 274.99 L133.00 274.75 L134.00 274.52 L135.00 274.19 L136.00 273.86 L137.00 273.52 L138.00 273.16 L139.00 272.78 L140.00 272.38 L141.00 271.95 L142.00 271.49 L143.00 270.99 L144.00 270.45 L145.00 269.87 L146.00 269.23 L147.00 268.46 L148.00 267.55 L149.00 266.52 L150.00 265.37 L151.00 264.11 L152.00 262.77 L153.00 261.34 L154.00 259.83 L155.00 258.13 L155.70 256.80 L155.90 256.39 L156.10 255.97 L156.30 255.54 L156.50 255.10 L156.70 254.64 L156.90 254.17 L157.10 253.69 L157.30 253.19 L157.50 252.67 L157.70 252.15 L157.90 251.60 L158.10 251.05 L158.30 250.51 L158.50 249.95 L158.70 249.36 L158.90 248.74 L159.10 248.06 L159.30 247.31 L159.50 246.47 L159.70 245.54 L159.90 244.50 L160.10 243.33 L160.30 242.04 L160.50 240.55 L160.70 238.60 L160.90 235.89 L161.10 232.13 L161.30 227.00 L161.50 205.39 L161.70 173.30 L161.70 172.20 L162.20 173.64 L162.70 175.16 L163.20 173.24 L163.70 170.94 L164.20 173.73 L164.70 171.89 L165.20 173.73 L165.70 170.46 L166.20 173.02 L166.70 169.66 L167.20 174.37 L167.70 172.78 L168.20 172.45 L168.70 175.02 L169.20 173.25 L169.70 170.79 L170.20 174.04 L170.70 171.59 L171.20 171.13 L171.70 174.13 L172.20 173.58 L172.70 172.75 L173.20 173.06 L173.70 173.24 L174.20 173.45 L174.70 177.63 L175.20 171.66 L175.70 175.86 L176.20 174.66 L176.70 173.47 L177.20 173.99 L177.70 176.47 L178.20 175.06 L178.70 175.38 L179.20 173.18 L179.70 170.72 L180.20 173.96 L180.70 174.16 L181.20 176.85 L181.70 173.88 L182.20 173.97 L182.70 173.47 L183.20 171.35 L183.70 170.50 L184.20 176.24 L184.70 173.10 L185.20 172.63 L185.70 173.15 L186.20 171.08 L186.70 168.96 L187.20 170.34 L187.70 175.26 L188.20 173.66 L188.70 173.88 L189.20 173.93 L189.70 172.54 L190.20 168.50 L190.70 172.46 L191.20 170.67 L191.70 173.20 L192.20 175.79 L192.70 174.49 L193.20 172.44 L193.70 174.02 L194.20 172.87 L194.70 173.94 L195.20 172.62 L195.70 172.17 L196.20 172.74 L196.70 173.01 L197.20 173.07 L197.70 174.36 L198.20 172.30 L198.70 172.45 L199.20 170.41 L199.70 173.46 L200.20 175.71 L200.70 174.06 L201.20 170.05 L201.70 172.16 L202.20 175.04 L202.70 172.74 L203.20 173.69 L203.70 170.35 L204.20 172.70 L204.70 173.99 L205.20 174.10 L205.70 172.77 L206.20 173.90 L206.70 174.82 L207.20 172.54 L207.70 172.63 L208.20 172.04 L208.70 172.58 L209.20 174.83 L209.70 172.98 L210.20 172.64 L210.70 172.11 L211.20 175.07 L211.70 173.48 L212.20 173.52 L212.70 172.40 L213.20 172.34 L213.70 173.06 L214.20 169.44 L214.70 173.06 L215.20 173.25 L215.70 171.19 L216.20 172.76 L216.70 174.24 L217.20 174.77 L217.70 171.69 L218.20 174.31 L218.70 176.64 L219.20 175.08 L219.70 173.70 L220.20 174.68 L220.70 173.17 L221.20 172.69 L221.70 174.41 L222.20 173.14 L222.70 174.80 L223.20 174.83 L223.70 172.66 L224.20 170.98 L224.70 174.38 L225.20 173.54 L225.70 169.62 L226.20 173.99 L226.70 172.88 L227.20 172.43 L227.70 172.73 L228.20 171.89 L228.70 176.29 L229.20 172.29 L229.70 170.65 L230.20 171.70 L230.70 172.76 L231.20 173.03 L231.70 173.13 L232.20 173.17 L232.70 171.99 L233.20 174.25 L233.70 173.18 L234.20 172.99 L234.70 175.27 L235.20 172.75 L235.70 173.97 L236.20 173.99 L236.70 168.87 L237.20 171.54 L237.70 173.38 L238.20 173.42 L238.70 173.34 L239.20 174.36 L239.70 174.05 L240.20 172.29 L240.70 173.44 L241.20 173.17 L241.70 172.46 L242.20 172.56 L242.70 173.42 L243.20 173.92 L243.70 174.61 L244.20 174.81 L244.70 173.81 L245.20 170.84 L245.70 173.74 L246.20 173.80 L246.70 174.69 L247.20 174.27 L247.70 173.94 L248.20 171.01 L248.70 172.26 L249.20 174.60 L249.70 172.75 L250.20 172.68 L250.70 175.73 L251.20 170.18 L251.70 173.70 L252.20 173.92 L252.70 171.75 L253.20 174.32 L253.70 172.35 L254.20 169.72 L254.70 173.71 L255.20 174.20 L255.70 173.48 L256.20 170.41 L256.70 172.80 L257.20 171.58 L257.70 172.44 L258.20 172.68 L258.70 173.20 L259.20 175.28 L259.70 173.66 L260.20 172.46 L260.70 172.78 L261.20 171.85 L261.70 173.24 L262.20 172.96 L262.70 174.14 L263.20 173.36 L263.70 173.54 L264.20 175.45 L264.70 172.67 L265.20 172.31 L265.70 174.59 L266.20 173.30 L266.70 173.49 L267.20 173.28 L267.70 170.17 L268.20 176.51 L268.70 174.24 L269.20 172.66 L269.70 170.63 L270.20 172.08 L270.70 174.38 L271.20 171.29 L271.70 175.04 L272.20 172.97 L272.70 172.35 L273.20 173.75 L273.70 172.88 L274.20 174.32 L274.70 174.50 L275.20 169.76 L275.70 172.68 L276.20 175.91 L276.70 175.86 L277.20 171.48 L277.70 170.90 L278.20 173.64 L278.70 174.63 L279.20 172.75 L279.70 176.51 L280.20 169.67 L280.70 176.49 L281.20 174.01 L281.70 172.48 L282.20 172.84 L282.70 175.52 L283.20 173.27 L283.70 174.74 L284.20 174.55 L284.70 172.85 L285.20 173.85 L285.70 172.23 L286.20 169.80 L286.70 172.96 L287.20 172.81 L287.70 171.99 L288.20 173.34 L288.70 173.64 L289.20 173.47 L289.70 172.71 L290.20 175.45 L290.70 174.52 L291.20 174.65 L291.70 174.05 L292.20 171.76 L292.70 170.18 L293.20 172.41 L293.70 172.78 L294.20 174.31 L294.70 174.48 L295.20 177.11 L295.70 173.89 L296.20 173.68 L296.70 173.97 L297.20 173.68 L297.70 173.20 L298.20 173.79 L298.70 173.00 L299.20 173.63 L299.70 175.16 L300.20 172.25 L300.70 173.55 L301.20 172.57 L301.70 175.05 L302.20 172.54 L302.70 172.73 L303.20 173.94 L303.70 173.69 L304.20 174.39 L304.70 177.46 L305.20 172.31 L305.70 174.37 L306.20 173.45 L306.70 174.58 L307.20 176.40 L307.70 173.62 L308.20 173.49 L308.70 176.69 L309.20 173.95 L309.70 173.41 L310.20 172.21 L310.70 172.06 L311.20 175.31 L311.70 171.90 L312.20 172.97 L312.70 171.87 L313.20 174.20 L313.70 173.89 L314.20 171.70 L314.70 172.60 L315.20 172.45 L315.70 168.69 L316.20 173.74 L316.70 173.60 L317.20 173.83 L317.70 173.61 L318.20 169.89 L318.70 173.44 L319.20 173.59 L319.70 170.99 L320.20 173.17 L320.70 172.48 L321.20 172.70 L321.70 174.02 L322.20 172.74 L322.70 171.80 L323.20 171.76 L323.70 172.39 L324.20 173.39 L324.70 173.35 L325.20 172.91 L325.70 173.40 L326.20 173.77 L326.70 173.73 L327.20 168.22 L327.70 174.67 L328.20 171.91 L328.70 171.68 L329.20 174.17 L329.70 174.51 L330.20 177.68 L330.70 170.97 L331.20 173.68 L331.70 173.46 L332.20 172.96 L332.70 174.14 L333.20 173.89 L333.70 171.78 L334.20 172.38 L334.70 173.78 L335.20 174.30 L335.70 172.78 L336.20 173.22 L336.70 173.17 L337.20 173.63 L337.70 173.12 L338.20 175.62 L338.70 175.09 L339.20 171.72 L339.70 173.14 L340.20 172.66 L340.70 176.08 L341.20 171.10 L341.70 172.50 L342.20 174.09 L342.70 172.26 L343.20 171.68 L343.70 174.39 L344.20 172.91 L344.70 171.42 L345.20 172.95 L345.70 176.54 L346.20 171.97 L346.70 174.26 L347.20 173.22 L347.70 170.88 L348.20 171.46 L348.70 172.69 L349.20 176.86 L349.70 172.65 L350.20 174.75 L350.70 175.71 L351.20 175.38 L351.70 170.62 L352.20 173.95 L352.70 173.10 L353.20 173.93 L353.70 172.77 L354.20 173.03 L354.70 172.73 L355.20 167.91 L355.70 173.97 L356.20 174.08 L356.70 174.83 L357.20 174.30 L357.70 171.91 L358.20 173.73 L358.70 172.99 L359.20 176.21 L359.70 174.50 L360.20 174.47 L360.70 173.37 L361.20 171.76 L361.70 172.01 L362.20 174.20 L362.70 174.28 L363.20 174.45 L363.70 172.34 L364.20 175.18 L364.70 173.85 L365.20 171.67 L365.70 172.56 L366.20 170.36 L366.70 172.88 L367.20 173.31 L367.70 174.29 L368.20 172.70 L368.70 174.07 L369.20 172.66 L369.70 176.35 L370.20 172.90 L370.70 177.22 L371.20 172.85 L371.70 173.31 L372.20 169.04 L372.70 173.39 L373.20 175.13 L373.70 174.86 L374.20 174.51 L374.70 175.02 L375.20 172.62 L375.70 173.90 L376.20 172.68 L376.70 173.97 L377.20 172.42 L377.70 173.42 L378.20 172.85 L378.70 173.97 L379.20 173.30 L379.70 175.07 L380.20 174.03 L380.70 169.85 L381.20 174.24 L381.70 173.07 L382.20 173.75 L382.70 173.74 L383.20 172.88 L383.70 174.03 L384.20 173.58 L384.70 174.57 L385.20 173.43 L385.70 172.65 L386.20 173.16 L386.70 172.85 L387.20 172.68 L387.70 173.16 L388.20 174.23 L388.70 174.81 L389.20 174.92 L389.70 173.04 L390.20 172.64 L390.70 173.10 L391.20 173.99 L391.70 174.11 L392.20 174.02 L392.70 170.85 L393.20 171.02 L393.70 174.47 L394.20 173.64 L394.70 173.43 L395.20 172.94 L395.70 173.32 L396.20 170.25 L396.70 174.28 L397.20 173.51 L397.70 176.70 L398.20 172.84 L398.70 174.03 L399.20 173.45 L399.70 174.78 L400.20 173.15 L400.70 173.36 L401.20 172.87 L401.70 172.64 L402.20 173.10 L402.70 173.23 L403.20 174.43 L403.70 173.26 L404.20 177.45 L404.70 176.93 L405.20 173.77 L405.70 169.39 L406.20 171.55 L406.70 171.76 L407.20 175.52 L407.70 172.74 L408.20 171.73 L408.70 173.40 L409.20 172.25 L409.70 172.81 L410.20 173.77 L410.70 172.48 L411.20 172.74 L411.70 172.85 L412.20 169.88 L412.70 169.25 L413.20 173.71 L413.70 174.26 L414.20 173.92 L414.70 174.64 L415.20 173.06 L415.70 170.09 L416.20 170.28 L416.70 171.98 L417.20 178.44 L417.70 174.77 L418.20 173.25 L418.70 178.50 L419.20 175.31 L419.70 170.72 L420.20 174.11 L420.70 172.04 L421.20 172.45 L421.70 172.90 L422.20 172.89 L422.70 173.06 L423.20 173.44 L423.70 172.51 L424.20 172.55 L424.70 169.59 L425.20 174.84 L425.70 176.88 L426.20 175.02 L426.70 173.84 L427.20 172.60 L427.70 172.93 L428.20 172.63 L428.70 171.29 L429.20 174.30 L429.70 172.83 L430.20 173.17 L430.70 169.63 L431.20 171.98 L431.70 172.84 L432.20 173.45 L432.70 173.99 L433.20 170.53 L433.70 173.16 L434.20 173.31 L434.70 173.12 L435.20 173.02 L435.70 173.02 L436.20 173.67 L436.70 173.44 L437.20 174.54 L437.70 172.70 L438.20 173.84 L438.70 173.80 L439.20 171.23 L439.70 173.21 L440.20 171.34 L440.70 173.22 L441.20 175.06 L441.70 173.67 L442.20 173.04 L442.70 173.18 L443.20 174.17 L443.70 170.44 L444.20 171.46 L444.60 172.66 L444.80 199.01 L445.00 215.90 L445.20 219.33 L445.40 222.29 L445.60 224.84 L445.80 227.01 L446.00 228.85 L446.20 230.41 L446.40 231.72 L446.60 232.83 L446.80 233.79 L447.00 234.63 L447.20 235.40 L447.40 236.15 L447.60 236.92 L447.80 237.75 L448.00 238.66 L448.20 239.56 L448.40 240.42 L448.60 241.25 L448.80 242.04 L449.00 242.80 L449.20 243.52 L449.40 244.22 L449.60 244.89 L449.80 245.52 L450.00 246.13 L450.20 246.70 L450.40 247.25 L450.60 247.77 L450.80 248.27 L451.00 248.74 L451.20 249.19 L451.40 249.61 L451.60 250.02 L451.80 250.43 L452.00 250.82 L452.20 251.21 L452.40 251.59 L452.60 251.96 L452.60 251.96 L453.60 253.71 L454.60 255.27 L455.60 256.68 L456.60 257.94 L457.60 259.15 L458.60 260.12 L459.60 260.87 L460.60 261.68 L461.60 262.74 L462.60 263.77 L463.60 264.32 L464.60 264.40 L465.60 264.64 L466.60 265.60 L467.60 267.05 L468.60 268.08 L469.60 268.15 L470.60 267.87 L471.60 268.36 L472.60 269.95 L473.60 271.62 L474.60 272.08 L475.60 271.28 L476.60 270.62 L477.60 271.48 L478.60 273.31 L479.60 274.42 L480.60 273.92 L481.60 272.73 L482.60 272.51 L483.60 273.84 L484.60 275.51 L485.60 275.96 L486.60 274.98 L487.60 274.02 L488.60 274.50 L489.60 276.23 L490.60 277.61 L491.60 277.44 L492.60 276.28 L493.60 275.80 L494.60 276.89 L495.60 278.66 L496.60 279.41 L497.60 278.59 L498.60 277.38 L499.60 277.41 L500.60 278.85 L501.60 280.29 L502.60 280.29 L503.60 279.05 L504.60 278.15 L505.60 278.79 L506.60 280.41 L507.60 281.34 L508.60 280.68 L509.60 279.33 L510.60 278.96 L511.60 280.13 L512.60 281.65 L513.60 281.93 L514.60 280.78 L515.60 279.63 L516.60 279.90 L517.60 281.42 L518.60 282.58 L519.60 282.19 L520.60 280.82 L521.60 280.13 L522.60 281.02 L523.60 282.60 L524.60 283.19 L525.60 282.23 L526.60 280.91 L527.60 280.82 L528.60 282.16 L529.60 283.49 L530.60 283.39 L531.60 282.04 L532.60 281.04 L533.60 281.58 L534.60 283.10 L535.60 283.92" stroke="#ffdf5c" stroke-width="1.6" fill="none" stroke-linejoin="round"/><rect x="71.5" y="154.5" width="465.0" height="143.0" fill="none" stroke="#c8c8c8" stroke-width="1"/></svg>
<div class="t" style="left:-77.5px;width:400px;text-align:center;top:302.47px;font-size:11.5px;color:#d0d0d0;font-weight:bold;">-6</div>
<div class="t" style="left:-17.5px;width:400px;text-align:center;top:302.47px;font-size:11.5px;color:#d0d0d0;font-weight:bold;">-4</div>
<div class="t" style="left:43.5px;width:400px;text-align:center;top:302.47px;font-size:11.5px;color:#d0d0d0;font-weight:bold;">-2</div>
<div class="t" style="left:104.5px;width:400px;text-align:center;top:302.47px;font-size:11.5px;color:#d0d0d0;font-weight:bold;">0</div>
<div class="t" style="left:164.5px;width:400px;text-align:center;top:302.47px;font-size:11.5px;color:#d0d0d0;font-weight:bold;">2</div>
<div class="t" style="left:225.5px;width:400px;text-align:center;top:302.47px;font-size:11.5px;color:#d0d0d0;font-weight:bold;">4</div>
<div class="t" style="left:285.5px;width:400px;text-align:center;top:302.47px;font-size:11.5px;color:#d0d0d0;font-weight:bold;">6</div>
<div class="t" style="left:-333px;width:400px;text-align:right;top:195.77px;font-size:11.5px;color:#d0d0d0;font-weight:bold;">-40</div>
<div class="t" style="left:-333px;width:400px;text-align:right;top:260.77px;font-size:11.5px;color:#d0d0d0;font-weight:bold;">-60</div>
<div class="t" style="left:103.5px;width:400px;text-align:center;top:317.30px;font-size:13px;color:#d0d0d0;font-weight:normal;-webkit-text-stroke:0.3px #d0d0d0">Frequency (MHz)</div>
<div class="t" style="left:-114.10px;top:219.60px;width:300px;height:12.8px;text-align:center;font-size:12.8px;color:#d0d0d0;transform:rotate(-90deg) scale(1,1.15);-webkit-text-stroke:0.25px #d0d0d0;">Power (dBm)</div>
<svg class="a" style="left:0px;top:0px;overflow:visible" width="1091" height="627" viewBox="0 0 1091 627"><rect x="150.5" y="411.5" width="352.0" height="154.0" fill="#000"/><path d="M220.5 411.5V565.5 M291.5 411.5V565.5 M361.5 411.5V565.5 M432.5 411.5V565.5 M150.5 534.5H502.5 M150.5 503.5H502.5 M150.5 473.5H502.5 M150.5 442.5H502.5" stroke="rgba(255,255,255,0.15)" stroke-width="1" fill="none"/><path d="M220.5 565.5v-4M220.5 411.5v4 M291.5 565.5v-4M291.5 411.5v4 M361.5 565.5v-4M361.5 411.5v4 M432.5 565.5v-4M432.5 411.5v4 M150.5 534.5h4M502.5 534.5h-4 M150.5 503.5h4M502.5 503.5h-4 M150.5 473.5h4M502.5 473.5h-4 M150.5 442.5h4M502.5 442.5h-4" stroke="#dcdcdc" stroke-width="1" fill="none"/><path d="M150.50 443.40 L185.70 459.30 L220.90 471.20 L256.10 475.30 L291.30 454.90 L326.50 466.10 L361.70 458.30 L396.90 452.00 L432.10 447.00 L467.30 450.00" stroke="#2d8fe0" stroke-width="1.1" fill="none" stroke-dasharray="2 2"/><circle cx="150.50" cy="443.40" r="1.6" fill="#2d8fe0"/><circle cx="185.70" cy="459.30" r="1.6" fill="#2d8fe0"/><circle cx="220.90" cy="471.20" r="1.6" fill="#2d8fe0"/><circle cx="256.10" cy="475.30" r="1.6" fill="#2d8fe0"/><circle cx="291.30" cy="454.90" r="1.6" fill="#2d8fe0"/><circle cx="326.50" cy="466.10" r="1.6" fill="#2d8fe0"/><circle cx="361.70" cy="458.30" r="1.6" fill="#2d8fe0"/><circle cx="396.90" cy="452.00" r="1.6" fill="#2d8fe0"/><circle cx="432.10" cy="447.00" r="1.6" fill="#2d8fe0"/><circle cx="467.30" cy="450.00" r="1.6" fill="#2d8fe0"/><path d="M150.50 466.10 L185.70 427.10 L220.90 459.30 L256.10 418.70 L291.30 450.90 L326.50 481.40 L361.70 463.30 L396.90 452.00 L432.10 438.00 L467.30 475.30" stroke="#3ccf2c" stroke-width="1.1" fill="none" stroke-dasharray="2 2"/><circle cx="150.50" cy="466.10" r="1.6" fill="#3ccf2c"/><circle cx="185.70" cy="427.10" r="1.6" fill="#3ccf2c"/><circle cx="220.90" cy="459.30" r="1.6" fill="#3ccf2c"/><circle cx="256.10" cy="418.70" r="1.6" fill="#3ccf2c"/><circle cx="291.30" cy="450.90" r="1.6" fill="#3ccf2c"/><circle cx="326.50" cy="481.40" r="1.6" fill="#3ccf2c"/><circle cx="361.70" cy="463.30" r="1.6" fill="#3ccf2c"/><circle cx="396.90" cy="452.00" r="1.6" fill="#3ccf2c"/><circle cx="432.10" cy="438.00" r="1.6" fill="#3ccf2c"/><circle cx="467.30" cy="475.30" r="1.6" fill="#3ccf2c"/><path d="M150.50 548.20 L185.70 546.40 L220.90 547.30 L256.10 549.30 L291.30 548.90 L326.50 547.80 L361.70 547.50 L396.90 546.20 L432.10 543.40 L467.30 546.20" stroke="#e8742a" stroke-width="1.4" fill="none"/><circle cx="150.50" cy="548.20" r="1.6" fill="#e8742a"/><circle cx="185.70" cy="546.40" r="1.6" fill="#e8742a"/><circle cx="220.90" cy="547.30" r="1.6" fill="#e8742a"/><circle cx="256.10" cy="549.30" r="1.6" fill="#e8742a"/><circle cx="291.30" cy="548.90" r="1.6" fill="#e8742a"/><circle cx="326.50" cy="547.80" r="1.6" fill="#e8742a"/><circle cx="361.70" cy="547.50" r="1.6" fill="#e8742a"/><circle cx="396.90" cy="546.20" r="1.6" fill="#e8742a"/><circle cx="432.10" cy="543.40" r="1.6" fill="#e8742a"/><circle cx="467.30" cy="546.20" r="1.6" fill="#e8742a"/><path d="M150.50 551.50 L185.70 552.60 L220.90 552.60 L256.10 552.60 L291.30 551.20 L326.50 550.90 L361.70 551.20 L396.90 553.30 L432.10 551.20 L467.30 552.30" stroke="#f2d84a" stroke-width="1.2" fill="none"/><circle cx="150.50" cy="551.50" r="1.6" fill="#f2d84a"/><circle cx="185.70" cy="552.60" r="1.6" fill="#f2d84a"/><circle cx="220.90" cy="552.60" r="1.6" fill="#f2d84a"/><circle cx="256.10" cy="552.60" r="1.6" fill="#f2d84a"/><circle cx="291.30" cy="551.20" r="1.6" fill="#f2d84a"/><circle cx="326.50" cy="550.90" r="1.6" fill="#f2d84a"/><circle cx="361.70" cy="551.20" r="1.6" fill="#f2d84a"/><circle cx="396.90" cy="553.30" r="1.6" fill="#f2d84a"/><circle cx="432.10" cy="551.20" r="1.6" fill="#f2d84a"/><circle cx="467.30" cy="552.30" r="1.6" fill="#f2d84a"/><rect x="150.5" y="411.5" width="352.0" height="154.0" fill="none" stroke="#e6e6e6" stroke-width="1"/><rect x="353.5" y="419.5" width="138.0" height="49.5" fill="#000" stroke="#fff" stroke-width="1"/><path d="M357 427.6H396" stroke="#f2d84a" stroke-width="1.2"/><rect x="375.2" y="426.3" width="2.6" height="2.6" fill="#f2d84a"/><path d="M357 439.1H396" stroke="#2d8fe0" stroke-width="1.1" stroke-dasharray="2 2"/><rect x="375.2" y="437.8" width="2.6" height="2.6" fill="#2d8fe0"/><path d="M357 450.6H396" stroke="#e8742a" stroke-width="1.4"/><rect x="375.2" y="449.3" width="2.6" height="2.6" fill="#e8742a"/><path d="M357 462.1H396" stroke="#3ccf2c" stroke-width="1.1" stroke-dasharray="2 2"/><rect x="375.2" y="460.8" width="2.6" height="2.6" fill="#3ccf2c"/></svg>
<div class="t" style="left:400.3px;top:421.57px;font-size:10.2px;color:#f0f0f0;font-weight:normal;letter-spacing:-0.012px;-webkit-text-stroke:0.25px #f0f0f0">PDSCH RMS EVM</div>
<div class="t" style="left:400.3px;top:433.07px;font-size:10.2px;color:#f0f0f0;font-weight:normal;letter-spacing:-0.056px;-webkit-text-stroke:0.25px #f0f0f0">PDSCH Peak EVM</div>
<div class="t" style="left:400.3px;top:444.57px;font-size:10.2px;color:#f0f0f0;font-weight:normal;letter-spacing:-0.059px;-webkit-text-stroke:0.25px #f0f0f0">PDCCH RMS EVM</div>
<div class="t" style="left:400.3px;top:456.07px;font-size:10.2px;color:#f0f0f0;font-weight:normal;letter-spacing:-0.099px;-webkit-text-stroke:0.25px #f0f0f0">PDCCH Peak EVM</div>
<div class="t" style="left:-49.19999999999999px;width:400px;text-align:center;top:568.27px;font-size:11.5px;color:#d0d0d0;font-weight:bold;">0</div>
<div class="t" style="left:21.200000000000017px;width:400px;text-align:center;top:568.27px;font-size:11.5px;color:#d0d0d0;font-weight:bold;">2</div>
<div class="t" style="left:91.60000000000002px;width:400px;text-align:center;top:568.27px;font-size:11.5px;color:#d0d0d0;font-weight:bold;">4</div>
<div class="t" style="left:162.00000000000006px;width:400px;text-align:center;top:568.27px;font-size:11.5px;color:#d0d0d0;font-weight:bold;">6</div>
<div class="t" style="left:232.40000000000003px;width:400px;text-align:center;top:568.27px;font-size:11.5px;color:#d0d0d0;font-weight:bold;">8</div>
<div class="t" style="left:302.8px;width:400px;text-align:center;top:568.27px;font-size:11.5px;color:#d0d0d0;font-weight:bold;">10</div>
<div class="t" style="left:-252.5px;width:400px;text-align:right;top:559.97px;font-size:11.5px;color:#d0d0d0;font-weight:bold;">2</div>
<div class="t" style="left:-252.5px;width:400px;text-align:right;top:529.17px;font-size:11.5px;color:#d0d0d0;font-weight:bold;">4</div>
<div class="t" style="left:-252.5px;width:400px;text-align:right;top:498.37px;font-size:11.5px;color:#d0d0d0;font-weight:bold;">6</div>
<div class="t" style="left:-252.5px;width:400px;text-align:right;top:467.57px;font-size:11.5px;color:#d0d0d0;font-weight:bold;">8</div>
<div class="t" style="left:-252.5px;width:400px;text-align:right;top:436.77px;font-size:11.5px;color:#d0d0d0;font-weight:bold;">10</div>
<div class="t" style="left:-252.5px;width:400px;text-align:right;top:405.97px;font-size:11.5px;color:#d0d0d0;font-weight:bold;">12</div>
<div class="t" style="left:151px;top:398.69px;font-size:11px;color:#d0d0d0;font-weight:bold;">&times;10</div>
<div class="t" style="left:169.8px;top:397.10px;font-size:8.5px;color:#d0d0d0;font-weight:bold;">-14</div>
<div class="t" style="left:126.75px;width:400px;text-align:center;top:395.80px;font-size:13px;color:#f4f4f4;font-weight:bold;letter-spacing:-0.184px;text-indent:-0.184px;">EVM vs Slot, BWP ID 1</div>
<div class="t" style="left:127.80000000000001px;width:400px;text-align:center;top:579.60px;font-size:13px;color:#d0d0d0;font-weight:normal;-webkit-text-stroke:0.3px #d0d0d0">Slot Number</div>
<div class="t" style="left:-24.78px;top:482.60px;width:300px;height:12px;text-align:center;font-size:12px;color:#d0d0d0;transform:rotate(-90deg) scale(1,1.15);-webkit-text-stroke:0.25px #d0d0d0;">EVM (%)</div>
<div class="t" style="left:33.2px;top:396.74px;font-size:12px;color:#f5f5f5;font-weight:normal;-webkit-text-stroke:0.25px #f5f5f5">BWP ID:</div>
<div class="a" style="left:33px;top:422.5px;width:47px;height:22px;background:#f5f5f5;border-radius:4px"></div>
<div class="t" style="left:39.1px;top:426.84px;font-size:12px;color:#1a1a1a;font-weight:normal;">1</div>
<svg class="a" style="left:65px;top:430px;overflow:visible" width="8" height="5" viewBox="0 0 8 5"><polygon points="0,0 8,0 4,5" fill="#555"/></svg>
<svg class="a" style="left:0px;top:0px;overflow:visible" width="1091" height="627" viewBox="0 0 1091 627"><rect x="706.5" y="411.5" width="308.0" height="154.0" fill="#000"/><path d="M783.5 411.5V565.5 M860.5 411.5V565.5 M937.5 411.5V565.5 M706.5 526.5H1014.5 M706.5 488.5H1014.5 M706.5 450.5H1014.5" stroke="rgba(255,255,255,0.15)" stroke-width="1" fill="none"/><path d="M783.5 565.5v-4M783.5 411.5v4 M860.5 565.5v-4M860.5 411.5v4 M937.5 565.5v-4M937.5 411.5v4 M706.5 526.5h4M1014.5 526.5h-4 M706.5 488.5h4M1014.5 488.5h-4 M706.5 450.5h4M1014.5 450.5h-4" stroke="#dcdcdc" stroke-width="1" fill="none"/><rect x="805" y="433" width="3" height="3" fill="#2a8fdc"/><rect x="805" y="541" width="3" height="3" fill="#2a8fdc"/><rect x="913" y="433" width="3" height="3" fill="#2a8fdc"/><rect x="913" y="541" width="3" height="3" fill="#2a8fdc"/><rect x="706.5" y="411.5" width="308.0" height="154.0" fill="none" stroke="#e6e6e6" stroke-width="1"/><rect x="948.5" y="419.5" width="55" height="27" fill="#000" stroke="#fff" stroke-width="1"/><circle cx="956.6" cy="426.8" r="1.3" fill="#f2d84a"/><circle cx="956.6" cy="438.7" r="1.5" fill="#2d8fe0"/></svg>
<div class="t" style="left:963px;top:421.44px;font-size:10px;color:#f0f0f0;font-weight:normal;-webkit-text-stroke:0.25px #f0f0f0">PDSCH</div>
<div class="t" style="left:963px;top:433.24px;font-size:10px;color:#f0f0f0;font-weight:normal;-webkit-text-stroke:0.25px #f0f0f0">PDCCH</div>
<div class="t" style="left:506.79999999999995px;width:400px;text-align:center;top:568.27px;font-size:11.5px;color:#d0d0d0;font-weight:bold;">-2</div>
<div class="t" style="left:583.8px;width:400px;text-align:center;top:568.27px;font-size:11.5px;color:#d0d0d0;font-weight:bold;">-1</div>
<div class="t" style="left:660.8px;width:400px;text-align:center;top:568.27px;font-size:11.5px;color:#d0d0d0;font-weight:bold;">0</div>
<div class="t" style="left:737.8px;width:400px;text-align:center;top:568.27px;font-size:11.5px;color:#d0d0d0;font-weight:bold;">1</div>
<div class="t" style="left:814.8px;width:400px;text-align:center;top:568.27px;font-size:11.5px;color:#d0d0d0;font-weight:bold;">2</div>
<div class="t" style="left:303.5px;width:400px;text-align:right;top:405.97px;font-size:11.5px;color:#d0d0d0;font-weight:bold;">1</div>
<div class="t" style="left:303.5px;width:400px;text-align:right;top:444.47px;font-size:11.5px;color:#d0d0d0;font-weight:bold;">0.5</div>
<div class="t" style="left:303.5px;width:400px;text-align:right;top:482.97px;font-size:11.5px;color:#d0d0d0;font-weight:bold;">0</div>
<div class="t" style="left:303.5px;width:400px;text-align:right;top:521.47px;font-size:11.5px;color:#d0d0d0;font-weight:bold;">-0.5</div>
<div class="t" style="left:303.5px;width:400px;text-align:right;top:559.97px;font-size:11.5px;color:#d0d0d0;font-weight:bold;">-1</div>
<div class="t" style="left:660.6px;width:400px;text-align:center;top:395.80px;font-size:13px;color:#f4f4f4;font-weight:bold;letter-spacing:-0.232px;text-indent:-0.232px;">Constellation, BWP ID 1</div>
<div class="t" style="left:661px;width:400px;text-align:center;top:580.56px;font-size:12.8px;color:#d0d0d0;font-weight:normal;-webkit-text-stroke:0.3px #d0d0d0">In-phase Amplitude</div>
<div class="t" style="left:524.32px;top:482.62px;width:300px;height:12.75px;text-align:center;font-size:12.75px;color:#d0d0d0;transform:rotate(-90deg) scale(1,1.15);-webkit-text-stroke:0.25px #d0d0d0;">Quadrature Amplitude</div>
<div class="t" style="left:567.4px;top:396.74px;font-size:12px;color:#f5f5f5;font-weight:normal;-webkit-text-stroke:0.25px #f5f5f5">BWP ID:</div>
<div class="a" style="left:567px;top:422.5px;width:47px;height:22px;background:#f5f5f5;border-radius:4px"></div>
<div class="t" style="left:573.1px;top:426.84px;font-size:12px;color:#1a1a1a;font-weight:normal;">1</div>
<svg class="a" style="left:599px;top:430px;overflow:visible" width="8" height="5" viewBox="0 0 8 5"><polygon points="0,0 8,0 4,5" fill="#555"/></svg>
</body></html>
